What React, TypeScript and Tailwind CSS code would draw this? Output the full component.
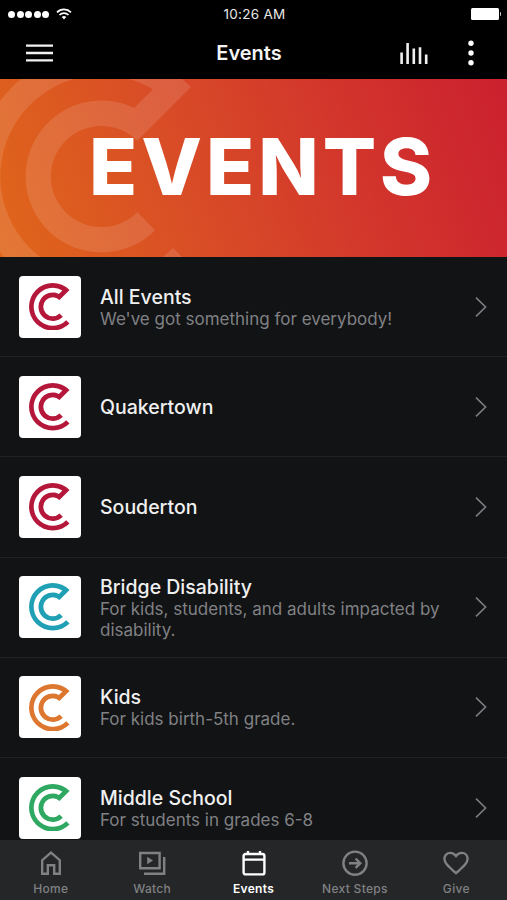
import type { ReactNode } from "react";

type EventItem = {
  title: string;
  subtitle?: string;
  color: string;
};

const events: EventItem[] = [
  { title: "All Events", subtitle: "We've got something for everybody!", color: "text-[#b5173a]" },
  { title: "Quakertown", color: "text-[#b5173a]" },
  { title: "Souderton", color: "text-[#b5173a]" },
  {
    title: "Bridge Disability",
    subtitle: "For kids, students, and adults impacted by disability.",
    color: "text-[#1fa0b4]",
  },
  { title: "Kids", subtitle: "For kids birth-5th grade.", color: "text-[#dd7730]" },
  { title: "Middle School", subtitle: "For students in grades 6-8", color: "text-[#2fa862]" },
];

function LogoMark({ className }: { className: string }) {
  return (
    <svg viewBox="-5 -5 10 10" className={className} fill="currentColor">
      <path d="M3.536 -3.536A5 5 0 1 0 3.536 3.536L2.828 2.828A4 4 0 1 1 2.032 -3.446L1.293 -2.707A3 3 0 1 0 2.121 2.121L1.414 1.414A2 2 0 1 1 1.414 -1.414Z" />
    </svg>
  );
}

function StatusBar() {
  return (
    <div className="flex h-7 items-center justify-between pr-[6px] pl-2">
      <div className="flex w-24 items-center">
        <div className="flex gap-[1.6px]">
          {[0, 1, 2, 3, 4].map((i) => (
            <span key={i} className="size-[7px] rounded-full bg-white" />
          ))}
        </div>
        <svg width="16" height="12" viewBox="0 0 16 12" className="ml-[7px]" fill="none" stroke="white" strokeWidth="1.7">
          <path d="M1 4.3a10 10 0 0 1 14 0" />
          <path d="M3.5 7a6.4 6.4 0 0 1 9 0" />
          <path d="M8 11.4 5.7 9.1a3.3 3.3 0 0 1 4.6 0Z" fill="white" stroke="none" />
        </svg>
      </div>
      <span className="text-[13.5px] tracking-[0.3px] text-[#e8e8e8]">10:26 AM</span>
      <div className="flex w-24 items-center justify-end gap-px">
        <span className="h-[12px] w-[28px] rounded-[1.5px] bg-white" />
        <span className="h-1 w-[1.5px] rounded-r-full bg-white/80" />
      </div>
    </div>
  );
}

function TopBar() {
  return (
    <div className="flex h-[51px] items-center justify-between pr-[33px] pl-[26px]">
      <div className="w-[72px] pb-[1px]">
        <svg width="27" height="20" viewBox="0 0 27 20" stroke="#f2f2f2" strokeWidth="2.4">
          <path d="M0 2.6h27M0 10h27M0 17.4h27" />
        </svg>
      </div>
      <h2 className="pb-[2px] text-[20px] font-semibold text-[#f4f4f4]">Events</h2>
      <div className="flex w-[74px] items-center justify-between pb-[1px]">
        <svg width="28" height="22" viewBox="0 0 28 22" stroke="#f0f0f0" strokeWidth="2.6">
          <path d="M1.6 10.5V22M7.6 1v21M13.8 6.4V22M20 5.2V22M26.2 12.6V22" />
        </svg>
        <svg width="6" height="26" viewBox="0 0 6 26" fill="white">
          <circle cx="3" cy="3.2" r="2.7" />
          <circle cx="3" cy="13" r="2.7" />
          <circle cx="3" cy="22.8" r="2.7" />
        </svg>
      </div>
    </div>
  );
}

function Hero() {
  return (
    <div className="relative h-[178px] overflow-hidden bg-[linear-gradient(70deg,#e0661a_0%,#d94e26_35%,#d2342c_70%,#cb202f_100%)]">
      <LogoMark className="absolute -top-[29px] -left-[25px] size-[253px] text-white/12" />
      <h1 className="relative pt-[48px] pl-[89px] text-[79px] leading-none font-extrabold tracking-[4px] text-white">
        EVENTS
      </h1>
    </div>
  );
}

function EventRow({ item }: { item: EventItem }) {
  return (
    <li className="flex h-[100.2px] shrink-0 items-center border-b border-[#212224] pr-[20px] pl-[19px]">
      <div className="flex size-[62px] shrink-0 items-center justify-center rounded-[4px] bg-white pl-[6px]">
        <LogoMark className={`size-[47.5px] ${item.color}`} />
      </div>
      <div className="ml-[19px] flex-1 pt-px">
        <div className="text-[19.5px] leading-[24px] font-medium text-[#f0f0f0]">{item.title}</div>
        {item.subtitle && (
          <div className="w-[350px] text-[17px] leading-[21px] text-[#808184]">{item.subtitle}</div>
        )}
      </div>
      <svg width="12" height="20" viewBox="0 0 12 20" fill="none" stroke="#7c7d80" strokeWidth="1.6">
        <path d="M1 .6 10.6 10 1 19.4" />
      </svg>
    </li>
  );
}

function Tab({ label, active, children }: { label: string; active?: boolean; children: ReactNode }) {
  return (
    <div className={`flex flex-1 flex-col items-center ${active ? "text-white" : "text-[#808183]"}`}>
      <svg width="28" height="28" viewBox="0 0 28 28" fill="none" stroke="currentColor" strokeWidth="2.4">
        {children}
      </svg>
      <span className={`mt-[4px] text-[12px] leading-4 tracking-[0.3px] ${active ? "font-semibold" : "font-medium"}`}>
        {label}
      </span>
    </div>
  );
}

function TabBar() {
  return (
    <nav className="absolute inset-x-0 bottom-0 flex h-[60px] bg-[#252628] pt-[9px]">
      <Tab label="Home">
        <path d="M5.2 24.8V11.2L14 3.6l8.8 7.6v13.6h-5.6v-8.6h-6.4v8.6Z" />
      </Tab>
      <Tab label="Watch">
        <path d="M2.2 4h19.4v15.2H2.2ZM26.2 8v16.8H6" />
        <path d="M9.2 7.8v7.4l5.8-3.7Z" fill="currentColor" stroke="none" />
      </Tab>
      <Tab label="Events" active>
        <rect x="3.6" y="5" width="20.8" height="20.4" rx="2" />
        <path d="M3.6 10.6h20.8M8 2v3M20 2v3" />
      </Tab>
      <Tab label="Next Steps">
        <circle cx="14" cy="14.2" r="11.6" />
        <path d="M8 14.2h11M14.6 9.6l4.7 4.6-4.7 4.6" />
      </Tab>
      <Tab label="Give">
        <path d="M14 24.2C6.6 17.6 2.4 14.4 2.4 9.8c0-3.4 2.6-5.9 5.9-5.9 2.3 0 4.3 1.1 5.7 3.1 1.4-2 3.4-3.1 5.7-3.1 3.3 0 5.9 2.5 5.9 5.9 0 4.6-4.2 7.8-11.6 14.4Z" />
      </Tab>
    </nav>
  );
}

export default function App() {
  return (
    <main className="relative flex h-[900px] w-[507px] flex-col overflow-hidden bg-[#121315] font-['Inter',sans-serif]">
      <header className="shrink-0 bg-black">
        <StatusBar />
        <TopBar />
      </header>
      <div className="shrink-0">
        <Hero />
      </div>
      <ul className="flex flex-col">
        {events.map((item) => (
          <EventRow key={item.title} item={item} />
        ))}
      </ul>
      <TabBar />
    </main>
  );
}
